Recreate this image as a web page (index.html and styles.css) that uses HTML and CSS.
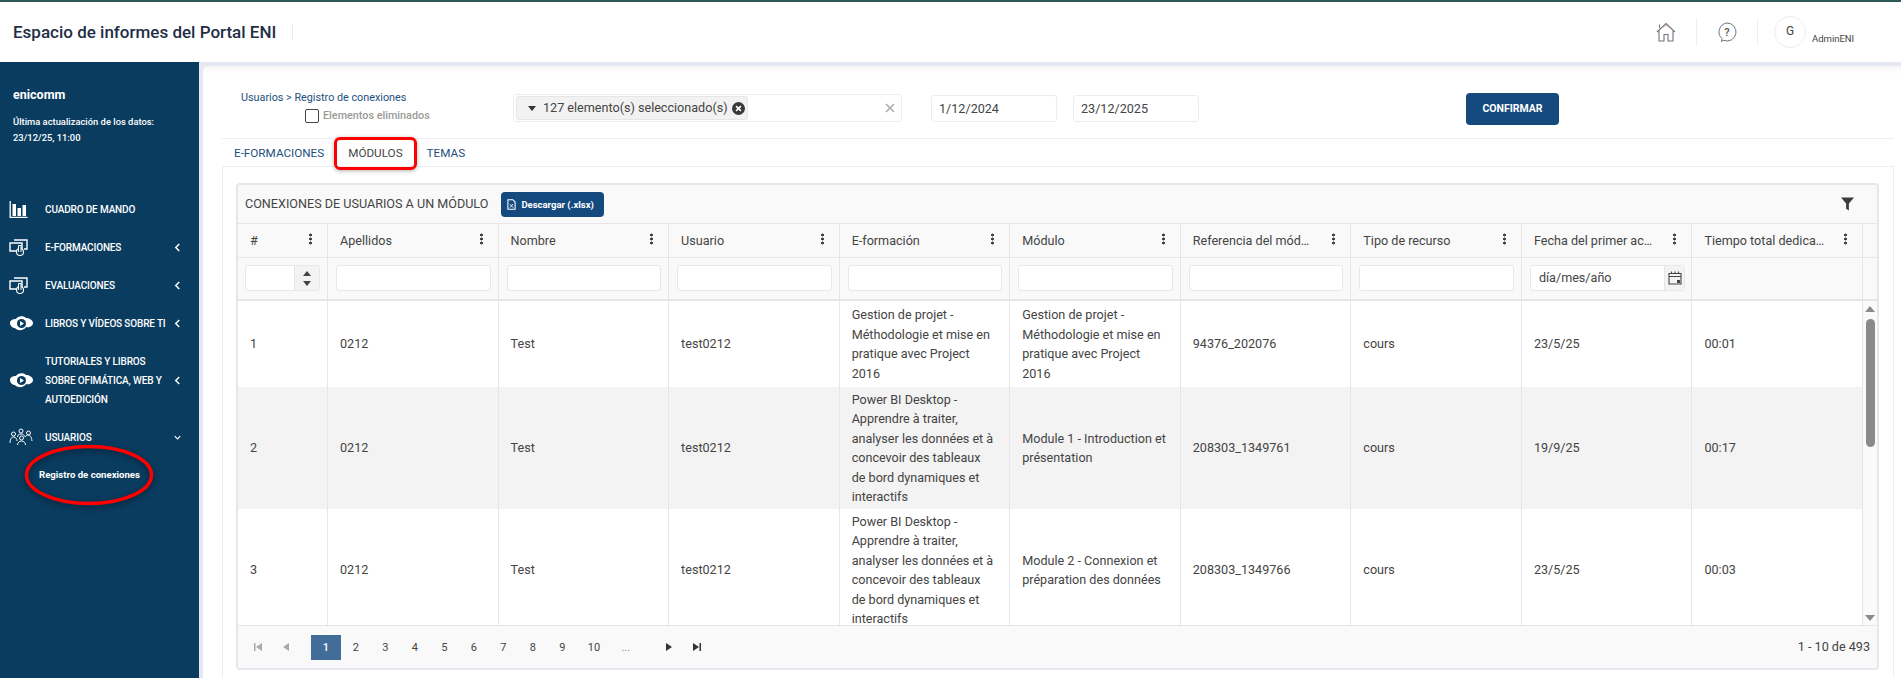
FILE: index.html
```html
<!DOCTYPE html>
<html lang="es"><head>
  <meta charset="utf-8">
  <title>Espacio de informes del Portal ENI</title>
  <link rel="stylesheet" href="styles.css">
</head>
<body>

<header class="topbar">
  <h1 class="app-title">Espacio de informes del Portal ENI</h1>
  <div class="top-tools">
    <svg class="top-icon" viewBox="0 0 20 20"><path d="M1 10 10 1.500 19 10M3.500 6V2.500M3 9V19H8V12.500H12V19H17V9" fill="none" stroke="#6f7480" stroke-width="1.100"/><path d="M5 6.500 10 3 15 6.500" fill="none" stroke="#c79a7a" stroke-width=".8"/></svg>
    <span class="top-sep"></span>
    <svg class="top-icon" viewBox="0 0 20 20"><path d="M10 1a9 9 0 1 1-3.200 17.400L4.500 19.500 5 16.600A9 9 0 0 1 10 1Z" fill="none" stroke="#6f7480" stroke-width="1"/><text x="10" y="14" text-anchor="middle" class="help-mark">?</text></svg>
    <span class="top-sep"></span>
    <span class="avatar">G</span>
    <span class="user-name">AdminENI</span>
  </div>
</header>

<div class="layout">
  <nav class="sidebar">
    <div class="brand">enicomm</div>
    <p class="updated">Última actualización de los datos:<br>23/12/25, 11:00</p>
    <ul class="menu">
      <li class="menu-item">
        <svg class="menu-icon" viewBox="0 0 18 17"><path d="M.7 0V16.300H18" fill="none" stroke="#fff" stroke-width="1.300"/><path d="M3 3h3.500v12H3zM8 7h3.500v8H8zM13 4h3.500v11H13z" fill="#fff"/></svg>
        <span class="menu-label">CUADRO DE MANDO</span>
      </li>
      <li class="menu-item">
        <svg class="menu-icon" viewBox="0 0 19 17"><path d="M5 1H18V10H15M1 4H13V12H1Z" fill="none" stroke="#fff" stroke-width="1.400"/><circle cx="11" cy="13" r="3.500" fill="#0a3c60" stroke="#fff" stroke-width="1.100"/><path d="M9.500 13V6.500h2.500V13" fill="#0a3c60" stroke="#fff"/></svg>
        <span class="menu-label">E-FORMACIONES</span>
        <svg class="chev" viewBox="0 0 8 10"><path d="M6 1 2 5l4 4" fill="none" stroke="#fff" stroke-width="1.700"/></svg>
      </li>
      <li class="menu-item">
        <svg class="menu-icon" viewBox="0 0 19 17"><path d="M5 1H18V10H15M1 4H13V12H1Z" fill="none" stroke="#fff" stroke-width="1.400"/><circle cx="11" cy="13" r="3.500" fill="#0a3c60" stroke="#fff" stroke-width="1.100"/><path d="M9.500 13V6.500h2.500V13" fill="#0a3c60" stroke="#fff"/></svg>
        <span class="menu-label">EVALUACIONES</span>
        <svg class="chev" viewBox="0 0 8 10"><path d="M6 1 2 5l4 4" fill="none" stroke="#fff" stroke-width="1.700"/></svg>
      </li>
      <li class="menu-item">
        <svg class="menu-icon wide" viewBox="0 0 24 18"><path d="M1 9c0-3 3-4 6-4 1-3 8-4 10-1 3 0 7 2 7 5s-4 5-7 4c-2 4-9 4-11 1-2 0-5-2-5-5Z" fill="#fff"/><circle cx="12.500" cy="9.500" r="4.500" fill="#0a3c60"/><path d="M11 7v5l4-2.500Z" fill="#fff"/></svg>
        <span class="menu-label">LIBROS Y VÍDEOS SOBRE TI</span>
        <svg class="chev" viewBox="0 0 8 10"><path d="M6 1 2 5l4 4" fill="none" stroke="#fff" stroke-width="1.700"/></svg>
      </li>
      <li class="menu-item tall">
        <svg class="menu-icon wide" viewBox="0 0 24 18"><path d="M1 9c0-3 3-4 6-4 1-3 8-4 10-1 3 0 7 2 7 5s-4 5-7 4c-2 4-9 4-11 1-2 0-5-2-5-5Z" fill="#fff"/><circle cx="12.500" cy="9.500" r="4.500" fill="#0a3c60"/><path d="M11 7v5l4-2.500Z" fill="#fff"/></svg>
        <span class="menu-label">TUTORIALES Y LIBROS SOBRE OFIMÁTICA, WEB Y AUTOEDICIÓN</span>
        <svg class="chev" viewBox="0 0 8 10"><path d="M6 1 2 5l4 4" fill="none" stroke="#fff" stroke-width="1.700"/></svg>
      </li>
      <li class="menu-item">
        <svg class="menu-icon wide" viewBox="0 0 24 18" fill="none" stroke="#fff" stroke-width="1"><circle cx="4.500" cy="6" r="2"/><circle cx="12" cy="3" r="2"/><circle cx="19.500" cy="5" r="2"/><circle cx="12.500" cy="10" r="2"/><path d="M1 15c0-3 1-6 3.500-6S8 11 8 13M8.500 9c0-1.500 1-3 3.500-3s3 1 3.500 2.500M16 9c.5-1 2-2 3.500-2s3 2 3.500 6M8.500 17c0-2 1.500-4 4-4s4 2 4 4"/></svg>
        <span class="menu-label">USUARIOS</span>
        <svg class="chev" viewBox="0 0 10 8"><path d="M1 2l4 4 4-4" fill="none" stroke="#fff" stroke-width="1.500"/></svg>
      </li>
      <li class="submenu-item">
        Registro de conexiones
        <svg class="mark-ellipse" viewBox="0 0 130 62"><ellipse cx="65" cy="31" rx="62.500" ry="28.500"/></svg>
      </li>
    </ul>
  </nav>

  <main class="content">
    <section class="filters">
      <div class="crumbs">
        <div class="crumb-path">Usuarios &gt; Registro de conexiones</div>
        <label class="deleted"><span class="check"></span>Elementos eliminados</label>
      </div>
      <div class="multi">
        <span class="chip">
          <span class="chip-caret"></span>127 elemento(s) seleccionado(s)
          <svg class="chip-x" viewBox="0 0 12 12"><circle cx="6" cy="6" r="6" fill="#3a3a3a"/><path d="M3.800 3.800l4.400 4.400M8.200 3.800 3.800 8.200" stroke="#fff" stroke-width="1.500"/></svg>
        </span>
        <svg class="multi-x" viewBox="0 0 10 10"><path d="M1 1l8 8M9 1 1 9" stroke="#aaa" stroke-width="1.500"/></svg>
      </div>
      <div class="date date-from">1/12/2024</div>
      <div class="date date-to">23/12/2025</div>
      <button class="confirm">CONFIRMAR</button>
    </section>

    <div class="tabs">
      <span class="tab">E-FORMACIONES</span>
      <span class="tab tab-marked">MÓDULOS</span>
      <span class="tab">TEMAS</span>
    </div>

    <section class="panel">
      <div class="grid-box">
        <div class="toolbar">
          <span class="grid-title">CONEXIONES DE USUARIOS A UN MÓDULO</span>
          <button class="download">
            <svg class="file-icon" viewBox="0 0 10 12"><path d="M1 .7H6.500L9 3.300V11.300H1Z" fill="none" stroke="#fff" stroke-width="1.200"/><path d="M3.300 5.500l3.400 4M6.700 5.500l-3.400 4" stroke="#fff"/></svg>
            Descargar (.xlsx)
          </button>
          <svg class="funnel" viewBox="0 0 14 14"><path d="M0 0H14L8.500 6.500V14L5.500 12V6.500Z" fill="#3c3c3c"/></svg>
        </div>

        <div class="row head">
          <div class="th"><span>#</span><i class="dots"></i></div>
          <div class="th"><span>Apellidos</span><i class="dots"></i></div>
          <div class="th"><span>Nombre</span><i class="dots"></i></div>
          <div class="th"><span>Usuario</span><i class="dots"></i></div>
          <div class="th"><span>E-formación</span><i class="dots"></i></div>
          <div class="th"><span>Módulo</span><i class="dots"></i></div>
          <div class="th"><span>Referencia del módulo</span><i class="dots"></i></div>
          <div class="th"><span>Tipo de recurso</span><i class="dots"></i></div>
          <div class="th"><span>Fecha del primer acceso</span><i class="dots"></i></div>
          <div class="th"><span>Tiempo total dedicado</span><i class="dots"></i></div>
        </div>

        <div class="row filter-row">
          <div class="fc">
            <div class="finput num"><span class="spin"><b class="up"></b><b class="down"></b></span></div>
          </div>
          <div class="fc"><div class="finput"></div></div>
          <div class="fc"><div class="finput"></div></div>
          <div class="fc"><div class="finput"></div></div>
          <div class="fc"><div class="finput"></div></div>
          <div class="fc"><div class="finput"></div></div>
          <div class="fc"><div class="finput"></div></div>
          <div class="fc"><div class="finput"></div></div>
          <div class="fc">
            <div class="finput date-input">
              <span class="date-ph">día/mes/año</span>
              <span class="cal-btn"><svg class="cal" viewBox="0 0 14 14"><path d="M1 2.500H13V13H1ZM1 5.500H13M3.500 .5V3M7 .5V3M10.500 .5V3" fill="none" stroke="#444" stroke-width="1.100"/><path d="M9 9h3v3H9z" fill="#444"/></svg></span>
            </div>
          </div>
          <div class="fc"></div>
        </div>

        <div class="body-wrap">
          <div class="rows">
            <div class="row data">
              <div class="td">1</div><div class="td">0212</div><div class="td">Test</div><div class="td">test0212</div>
              <div class="td">Gestion de projet - Méthodologie et mise en pratique avec Project 2016</div>
              <div class="td">Gestion de projet - Méthodologie et mise en pratique avec Project 2016</div>
              <div class="td">94376_202076</div><div class="td">cours</div><div class="td">23/5/25</div><div class="td">00:01</div>
            </div>
            <div class="row data alt">
              <div class="td">2</div><div class="td">0212</div><div class="td">Test</div><div class="td">test0212</div>
              <div class="td">Power BI Desktop - Apprendre à traiter, analyser les données et à concevoir des tableaux de bord dynamiques et interactifs</div>
              <div class="td">Module 1 - Introduction et présentation</div>
              <div class="td">208303_1349761</div><div class="td">cours</div><div class="td">19/9/25</div><div class="td">00:17</div>
            </div>
            <div class="row data">
              <div class="td">3</div><div class="td">0212</div><div class="td">Test</div><div class="td">test0212</div>
              <div class="td">Power BI Desktop - Apprendre à traiter, analyser les données et à concevoir des tableaux de bord dynamiques et interactifs</div>
              <div class="td">Module 2 - Connexion et préparation des données</div>
              <div class="td">208303_1349766</div><div class="td">cours</div><div class="td">23/5/25</div><div class="td">00:03</div>
            </div>
          </div>
          <div class="scrollbar">
            <b class="sb-up"></b>
            <b class="sb-thumb"></b>
            <b class="sb-down"></b>
          </div>
        </div>

        <div class="pager">
          <svg class="pg-arrow off first" viewBox="0 0 8 8"><path d="M0 0h1.500v8H0zM8 0v8L2 4Z"/></svg>
          <svg class="pg-arrow off prev" viewBox="0 0 8 8"><path d="M7 0v8L1 4Z"/></svg>
          <span class="pg-num active">1</span>
          <span class="pg-num">2</span>
          <span class="pg-num">3</span>
          <span class="pg-num">4</span>
          <span class="pg-num">5</span>
          <span class="pg-num">6</span>
          <span class="pg-num">7</span>
          <span class="pg-num">8</span>
          <span class="pg-num">9</span>
          <span class="pg-num pg-wide">10</span>
          <span class="pg-num">...</span>
          <svg class="pg-arrow next" viewBox="0 0 8 8"><path d="M1 0v8l6-4Z"/></svg>
          <svg class="pg-arrow last" viewBox="0 0 8 8"><path d="M0 0v8l6-4ZM6.500 0H8v8H6.500z"/></svg>
          <span class="pg-info">1 - 10 de 493</span>
        </div>
      </div>
    </section>
  </main>
</div>

</body></html>
```
FILE: styles.css
```css
* { box-sizing: border-box; }
html, body { margin: 0; padding: 0; height: 100%; overflow: hidden; }
body { font: 12.6px/19.5px Roboto, "Liberation Sans", sans-serif; color: #444; background: #fff; }

/* top bar */
.topbar {
  height: 62px;
  border-top: 2px solid #2d5a55;
  display: flex;
  align-items: center;
  padding: 0 0 0 13px;
  background: #fff;
}
.app-title {
  margin: 0;
  font-size: 17px;
  font-weight: 500;
  line-height: 16px;
  color: #232e45;
  padding-right: 16px;
  border-right: 1px solid #eceef2;
}
.top-tools { margin-left: auto; display: flex; align-items: center; width: 245px; }
.top-icon { width: 20px; height: 20px; flex: none; }
.help-mark { font: 500 11px Roboto, sans-serif; fill: #555; }
.top-sep { width: 1px; height: 28px; background: #eceef2; margin: 0 20px; }
.top-sep + .avatar { margin-left: -4px; }
.avatar {
  flex: none;
  width: 32px;
  height: 32px;
  border: 1px solid #eceef2;
  border-radius: 50%;
  font-size: 12px;
  text-align: center;
  line-height: 28px;
  color: #444;
}
.user-name { font-size: 9.5px; color: #444; margin: 14px 0 0 6px; white-space: nowrap; }

/* sidebar + main */
.layout { display: flex; height: 616px; background: #e4e8f0; padding-top: 4px; }
.sidebar { width: 199px; flex: none; margin-top: -4px; background: #0a3c60; color: #fff; padding: 25px 0 0 0; }
.brand { font-size: 12.5px; font-weight: 700; line-height: 16px; padding-left: 13px; }
.updated { margin: 11px 0 0; padding-left: 13px; font-size: 9.4px; font-weight: 500; line-height: 16px; }
.menu { list-style: none; margin: 44px 0 0; padding: 0; }
.menu-item {
  display: flex;
  align-items: center;
  height: 38px;
  padding-left: 9px;
  position: relative;
}
.menu-item.tall { height: 76px; }
.menu-icon { width: 19px; height: 17px; flex: none; margin-right: 17px; }
.menu-icon.wide { width: 24px; height: 18px; margin-right: 12px; }
.menu-label {
  font-size: 10px;
  font-weight: 500;
  line-height: 19px;
  letter-spacing: -.15px;
  width: 125px;
  white-space: normal;
}
.chev { width: 7px; height: 9px; margin-left: 4px; flex: none; }
.submenu-item {
  position: relative;
  padding-left: 39px;
  height: 38px;
  line-height: 38px;
  font-size: 9.6px;
  font-weight: 700;
  white-space: nowrap;
}
.mark-ellipse {
  position: absolute;
  left: 24px;
  top: -12px;
  width: 130px;
  height: 62px;
  overflow: visible;
  filter: drop-shadow(0 2px 3px rgba(0,0,0,.5));
}
.mark-ellipse ellipse { fill: none; stroke: #f00; stroke-width: 3.5; }

.content {
  flex: 1;
  background: #fff;
  margin-left: 4px;
  border-top-left-radius: 5px;
  padding: 0 7px 0 19px;
  box-shadow: inset 0 10px 8px -8px rgba(0,0,0,.05);
  overflow: hidden;
}

/* filter line */
.filters { display: flex; align-items: flex-start; height: 73px; padding-top: 27px; border-bottom: 1px solid #eceef2; }
.crumbs { width: 291px; flex: none; padding-left: 19px; }
.crumb-path { font-size: 10.8px; line-height: 14px; color: #1d4f7e; margin-top: -2px; }
.deleted { display: flex; align-items: center; margin: 4px 0 0 64px; font-size: 10.8px; font-weight: 500; color: #999; line-height: 14px; white-space: nowrap; }
.check { width: 14px; height: 14px; border: 1px solid #444; border-radius: 2px; margin-right: 4px; flex: none; }
.multi {
  width: 389px;
  height: 28px;
  border: 1px solid #ebedf0;
  border-radius: 3px;
  display: flex;
  align-items: center;
  padding: 0 2px;
  margin-top: 1px;
  flex: none;
}
.chip {
  width: 232px;
  height: 24px;
  background: #f2f2f2;
  border: 1px solid #e6e6e6;
  border-radius: 3px;
  display: flex;
  align-items: center;
  padding-left: 11px;
  white-space: nowrap;
}
.chip-caret { width: 0; height: 0; border: 4px solid transparent; border-top: 5px solid #333; border-bottom: 0; margin-right: 7px; }
.chip-x { width: 13px; height: 13px; margin-left: 4px; flex: none; }
.multi-x { width: 10px; height: 10px; margin-left: auto; margin-right: 4px; }
.date {
  height: 27px;
  border: 1px solid #ebedf0;
  border-radius: 3px;
  padding: 0 7px;
  line-height: 25px;
  margin-top: 2px;
  flex: none;
}
.date-from { width: 126px; margin-left: 29px; }
.date-to { width: 126px; margin-left: 16px; }
.confirm {
  width: 93px;
  height: 32px;
  margin-left: 267px;
  padding-bottom: 2px;
  flex: none;
  border: 0;
  border-radius: 4px;
  background: #154a7e;
  color: #fff;
  font: 700 10.5px Roboto, sans-serif;
}

/* tabs */
.tabs { display: flex; height: 28px; border-bottom: 1px solid #eceef2; padding-left: 12px; align-items: center; }
.tab { font-size: 11.7px; color: #1d4f7e; white-space: nowrap; position: relative; top: 1px; }
.tab-marked { margin: 0 24px; color: #444; }
.tab-marked::after {
  content: "";
  box-sizing: border-box;
  position: absolute;
  left: -14px;
  top: -7px;
  width: 83px;
  height: 33px;
  border: 3px solid #f00;
  border-radius: 6px;
  box-shadow: 0 1px 4px rgba(0,0,0,.3);
}

/* grid */
.panel { border-left: 1px solid #eceef2; border-right: 1px solid #eceef2; height: 515px; padding: 16px 14px 0 13px; }
.grid-box { border: 2px solid #e4e7ee; border-radius: 4px; height: 487px; display: flex; flex-direction: column; background: #fff; }
.toolbar { height: 39px; flex: none; display: flex; align-items: center; background: #f9f9f9; border-bottom: 1px solid #e6e6e6; padding-left: 7px; }
.grid-title { font-size: 12.6px; white-space: nowrap; }
.download {
  width: 103px;
  height: 25px;
  margin-left: 13px;
  border: 0;
  border-radius: 4px;
  background: #154a7e;
  color: #fff;
  font: 700 9.5px Roboto, sans-serif;
  display: flex;
  align-items: center;
  padding: 0 0 0 6px;
  white-space: nowrap;
}
.file-icon { width: 9px; height: 11px; margin-right: 5px; flex: none; }
.funnel { width: 13px; height: 14px; margin-left: auto; margin-right: 23px; }

.row { display: grid; grid-template-columns: 90px repeat(9, minmax(0, 1fr)); }
.head, .filter-row { padding-right: 14px; background: #f9f9f9; flex: none; }
.head { height: 34px; border-bottom: 1px solid #e6e6e6; }
.filter-row { height: 43px; border-bottom: 2px solid #e6e6e6; }
.th { display: flex; align-items: center; padding: 0 15px 0 12px; border-right: 1px solid #e6e6e6; min-width: 0; }
.th span { flex: 1; overflow: hidden; text-overflow: ellipsis; white-space: nowrap; padding-right: 17px; }
.dots { width: 3px; height: 12px; flex: none; margin-top: -3px; background: radial-gradient(circle, #444 1.4px, transparent 1.6px) 0 0 / 3px 4px repeat-y; }
.fc { border-right: 1px solid #e6e6e6; padding: 7px 7px 0 8px; }
.fc:first-child { padding-left: 7px; }
.finput { height: 26px; background: #fff; border: 1px solid #e8e8e8; border-radius: 3px; display: flex; }
.num { justify-content: flex-end; overflow: hidden; }
.spin { width: 25px; background: #f3f3f3; border-left: 1px solid #e6e6e6; display: flex; flex-direction: column; align-items: center; justify-content: center; gap: 5px; }
.up { border: 4px solid transparent; border-bottom: 5px solid #444; border-top: 0; }
.down { border: 4px solid transparent; border-top: 5px solid #444; border-bottom: 0; }
.date-input { align-items: stretch; overflow: hidden; margin-right: -1px; }
.date-ph { flex: 1; padding-left: 8px; line-height: 24px; }
.cal-btn { width: 20px; background: #f3f3f3; border-left: 1px solid #e6e6e6; display: flex; align-items: center; justify-content: center; }
.cal { width: 14px; height: 14px; }

.body-wrap { height: 324px; flex: none; display: flex; overflow: hidden; }
.rows { flex: 1; min-width: 0; }
.data { background: #fff; }
.data.alt { background: #f3f3f3; }
.data:nth-child(1) { height: 86px; }
.data:nth-child(2) { height: 122px; }
.data:nth-child(3) { height: 122px; }
.td { display: flex; align-items: center; padding: 0 12px; border-right: 1px solid #e6e6e6; }
.scrollbar { width: 14px; flex: none; background: #fafafa; display: flex; flex-direction: column; align-items: center; padding-top: 5px; }
.sb-up { border: 5px solid transparent; border-bottom: 6px solid #8a8a8a; border-top: 0; }
.sb-thumb { width: 9px; height: 128px; background: #8a8a8a; border-radius: 5px; margin-top: 7px; }
.sb-down { border: 5px solid transparent; border-top: 6px solid #8a8a8a; border-bottom: 0; margin-top: auto; margin-bottom: 4px; }

.pager { flex: 1; display: flex; align-items: center; background: #f9f9f9; border-top: 1px solid #e6e6e6; padding-left: 16px; }
.pg-arrow { width: 8px; height: 8px; flex: none; fill: #333; }
.pg-arrow.off { fill: #aaa; }
.prev { margin-left: 20px; margin-right: 21px; }
.pg-num { width: 29.500px; height: 25px; text-align: center; font-size: 11px; line-height: 25px; }
.pg-num.active { width: 30px; background: #426d99; color: #fff; font-weight: 500; }
.pg-num.pg-wide { width: 34px; }
.pg-num:nth-last-of-type(2) { color: #888; }
.next { margin-left: 24px; }
.last { margin-left: 20px; }
.pg-info { margin-left: auto; padding-right: 7px; white-space: nowrap; }
```
